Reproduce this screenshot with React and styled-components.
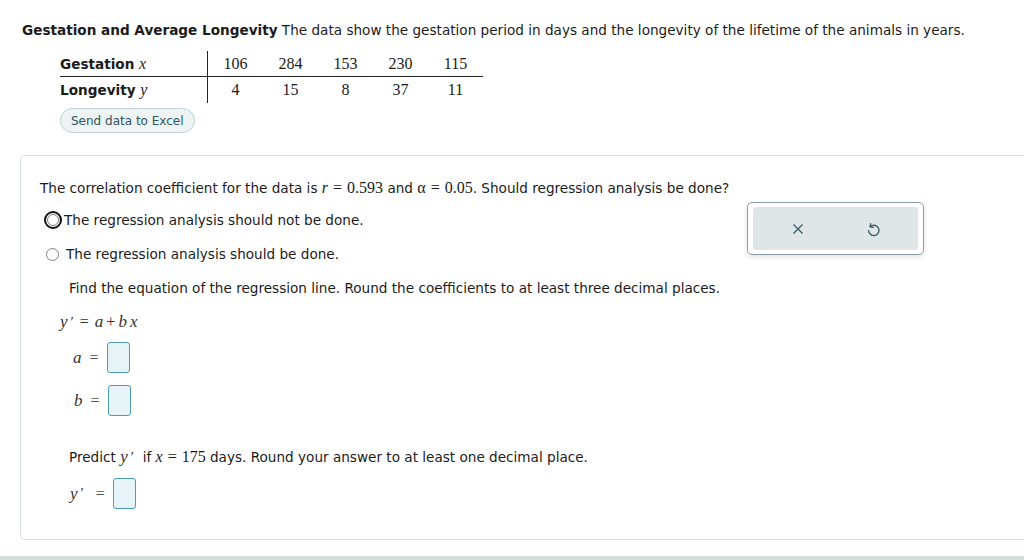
import React from "react";
import styled, { createGlobalStyle } from "styled-components";

const GlobalStyle = createGlobalStyle`
  html, body {
    margin: 0;
    padding: 0;
    background: #ffffff;
  }
  body {
    font-family: "DejaVu Sans", Verdana, sans-serif;
    font-size: 13.6px;
    color: #1b1b1b;
  }
`;

const Page = styled.div`
  width: 1024px;
  height: 560px;
  overflow: hidden;
  display: flex;
  flex-direction: column;
  align-items: flex-start;
  position: relative;
`;

const Intro = styled.div`
  padding: 21px 0 0 22px;
  line-height: 18px;
  white-space: nowrap;
`;

const Title = styled.span`
  font-weight: bold;
`;

const DataTable = styled.table`
  border-collapse: collapse;
  margin: 12px 0 0 60px;
`;

const LabelCell = styled.td`
  width: 147px;
  padding: 0;
  height: ${(p) => (p.$first ? "25px" : "26px")};
  font-weight: bold;
  border-right: 1px solid #222;
  border-bottom: ${(p) => (p.$first ? "1px solid #222" : "none")};
  vertical-align: middle;
`;

const NumCell = styled.td`
  width: 55px;
  padding: 0;
  text-align: center;
  font-family: "Liberation Serif", "Times New Roman", serif;
  font-size: 16px;
  border-bottom: ${(p) => (p.$first ? "1px solid #222" : "none")};
  vertical-align: middle;
`;

const Var = styled.i`
  font-family: "Liberation Serif", "Times New Roman", serif;
  font-size: 16px;
  font-weight: normal;
  margin-right: ${(p) => p.$after || 0}px;
`;

const Num = styled.span`
  font-family: "Liberation Serif", "Times New Roman", serif;
  font-size: 16px;
`;

const Op = styled.span`
  font-family: "Liberation Serif", "Times New Roman", serif;
  font-size: 16px;
  margin: 0 ${(p) => p.$space || 5}px;
`;

const ExcelButton = styled.button`
  margin: 5px 0 0 60px;
  height: 25px;
  padding: 0 10px;
  border: 1px solid #c3cfd2;
  border-radius: 13px;
  background: #eef3f4;
  color: #2f5565;
  font-family: "DejaVu Sans", Verdana, sans-serif;
  font-size: 12px;
`;

const Panel = styled.div`
  margin: 22px 0 0 20px;
  align-self: stretch;
  height: 383px;
  border: 1px solid #dbe2e2;
  border-right: none;
  border-radius: 5px 0 0 5px;
  display: flex;
  justify-content: space-between;
  align-items: flex-start;
`;

const Question = styled.div`
  padding: 22px 0 0 19px;
  display: flex;
  flex-direction: column;
`;

const Line = styled.div`
  height: 20px;
  display: flex;
  align-items: center;
  margin-top: ${(p) => p.$gap || 0}px;
  padding-left: ${(p) => p.$indent || 0}px;
  white-space: nowrap;
`;

const Choice = styled.label`
  height: 20px;
  display: flex;
  align-items: center;
  margin-top: ${(p) => p.$gap}px;
  padding-left: 4px;
  white-space: nowrap;
`;

const RadioFocus = styled.span`
  width: 14px;
  height: 14px;
  border: 2px solid #111;
  border-radius: 50%;
  display: flex;
  align-items: center;
  justify-content: center;
  margin-right: 2px;
  &::after {
    content: "";
    width: 10px;
    height: 10px;
    border-radius: 50%;
    border: 1px solid #7d7d7d;
    background: #fff;
  }
`;

const Radio = styled.span`
  width: 11px;
  height: 11px;
  border: 1px solid #808080;
  border-radius: 50%;
  margin: 0 7px 0 2px;
`;

const MathLabel = styled.span`
  font-family: "Liberation Serif", "Times New Roman", serif;
  font-size: 17px;
  color: #333;
  display: inline-flex;
  align-items: center;
`;

const Letter = styled.i`
  margin: 0 ${(p) => p.$space || 0}px;
`;

const Prime = styled.span`
  font-style: normal;
  margin-left: 3px;
  font-size: 15px;
`;

const Eq = styled.span`
  margin: 0 ${(p) => p.$right || 8}px 0 ${(p) => p.$left || 8}px;
  font-family: "Liberation Serif", "Times New Roman", serif;
  font-size: 16px;
  color: #555;
`;

const AnswerRow = styled.div`
  height: 31px;
  display: flex;
  align-items: center;
  margin-top: ${(p) => p.$gap}px;
  padding-left: ${(p) => p.$indent}px;
`;

const AnswerBox = styled.span`
  width: 21px;
  height: 29px;
  border: 1px solid #4b9cae;
  border-radius: 3px;
  background: #e6f4f8;
`;

const Tools = styled.div`
  margin: 46px 100px 0 0;
  width: 177px;
  height: 53px;
  border: 1px solid #8da0a7;
  border-radius: 5px;
  background: #fff;
  box-shadow: 0 2px 5px rgba(0, 0, 0, 0.12);
  padding: 4px 5px;
  box-sizing: border-box;
  display: flex;
`;

const ToolInner = styled.div`
  flex: 1;
  background: #dfe6e8;
  border-radius: 3px;
  display: flex;
  align-items: center;
  justify-content: space-around;
  padding: 0 8px;
`;

const ToolIcon = styled.span`
  width: 16px;
  height: 16px;
  display: flex;
  color: #3d5e6a;
  margin-top: ${(p) => p.$dy || 0}px;
`;

const Footer = styled.div`
  position: absolute;
  left: 0;
  right: 0;
  bottom: 0;
  height: 4px;
  background: #d5dcdc;
`;

const gest = [106, 284, 153, 230, 115];
const longv = [4, 15, 8, 37, 11];

export default function App() {
  return (
    <Page>
      <GlobalStyle />
      <Intro>
        <Title>Gestation and Average Longevity</Title> The data show the
        gestation period in days and the longevity of the lifetime of the
        animals in years.
      </Intro>
      <DataTable>
        <tbody>
          <tr>
            <LabelCell $first>
              Gestation <Var>x</Var>
            </LabelCell>
            {gest.map((v) => (
              <NumCell $first key={v}>
                {v}
              </NumCell>
            ))}
          </tr>
          <tr>
            <LabelCell>
              Longevity <Var>y</Var>
            </LabelCell>
            {longv.map((v) => (
              <NumCell key={v}>{v}</NumCell>
            ))}
          </tr>
        </tbody>
      </DataTable>
      <ExcelButton>Send data to Excel</ExcelButton>
      <Panel>
        <Question>
          <Line>
            The correlation coefficient for the data is&nbsp;
            <Var>r</Var>
            <Op>=</Op>
            <Num>0.593</Num>&nbsp;and&nbsp;
            <Num>α</Num>
            <Op>=</Op>
            <Num>0.05</Num>.&nbsp;Should regression analysis be done?
          </Line>
          <Choice $gap={12}>
            <RadioFocus />
            The regression analysis should not be done.
          </Choice>
          <Choice $gap={14}>
            <Radio />
            The regression analysis should be done.
          </Choice>
          <Line $gap={14} $indent={29}>
            Find the equation of the regression line. Round the coefficients to
            at least three decimal places.
          </Line>
          <Line $gap={14} $indent={20}>
            <MathLabel>
              <Letter>y</Letter>
              <Prime>′</Prime>
              <Op $space={6}>=</Op>
              <Letter>a</Letter>
              <Op $space={3}>+</Op>
              <Letter>b</Letter>
              <Letter $space={3}>x</Letter>
            </MathLabel>
          </Line>
          <AnswerRow $gap={10} $indent={33}>
            <MathLabel>
              <Letter>a</Letter>
            </MathLabel>
            <Eq>=</Eq>
            <AnswerBox />
          </AnswerRow>
          <AnswerRow $gap={12} $indent={34}>
            <MathLabel>
              <Letter>b</Letter>
            </MathLabel>
            <Eq>=</Eq>
            <AnswerBox />
          </AnswerRow>
          <Line $gap={31} $indent={29}>
            Predict&nbsp;
            <MathLabel>
              <Letter>y</Letter>
              <Prime>′</Prime>
            </MathLabel>
            &nbsp;&nbsp;if&nbsp;<Var>x</Var>
            <Op>=</Op>
            <Num>175</Num>&nbsp;days. Round your answer to at least one decimal
            place.
          </Line>
          <AnswerRow $gap={11} $indent={30}>
            <MathLabel>
              <Letter>y</Letter>
              <Prime>′</Prime>
            </MathLabel>
            <Eq $left={12}>=</Eq>
            <AnswerBox />
          </AnswerRow>
        </Question>
        <Tools>
          <ToolInner>
            <ToolIcon>
              <svg viewBox="0 0 16 16" width="16" height="16">
                <path
                  d="M3.5 3.5 L12.5 12.5 M12.5 3.5 L3.5 12.5"
                  stroke="currentColor"
                  strokeWidth="1.4"
                  fill="none"
                />
              </svg>
            </ToolIcon>
            <ToolIcon $dy={2}>
              <svg viewBox="0 0 16 16" width="16" height="16">
                <path
                  d="M5.2 4.6 A5.2 5.2 0 1 1 3.6 8.6"
                  stroke="currentColor"
                  strokeWidth="1.4"
                  fill="none"
                  strokeLinecap="round"
                />
                <path
                  d="M5.6 1.8 L5.2 4.8 L8.2 5.2"
                  stroke="currentColor"
                  strokeWidth="1.4"
                  fill="none"
                  strokeLinecap="round"
                  strokeLinejoin="round"
                />
              </svg>
            </ToolIcon>
          </ToolInner>
        </Tools>
      </Panel>
      <Footer />
    </Page>
  );
}
